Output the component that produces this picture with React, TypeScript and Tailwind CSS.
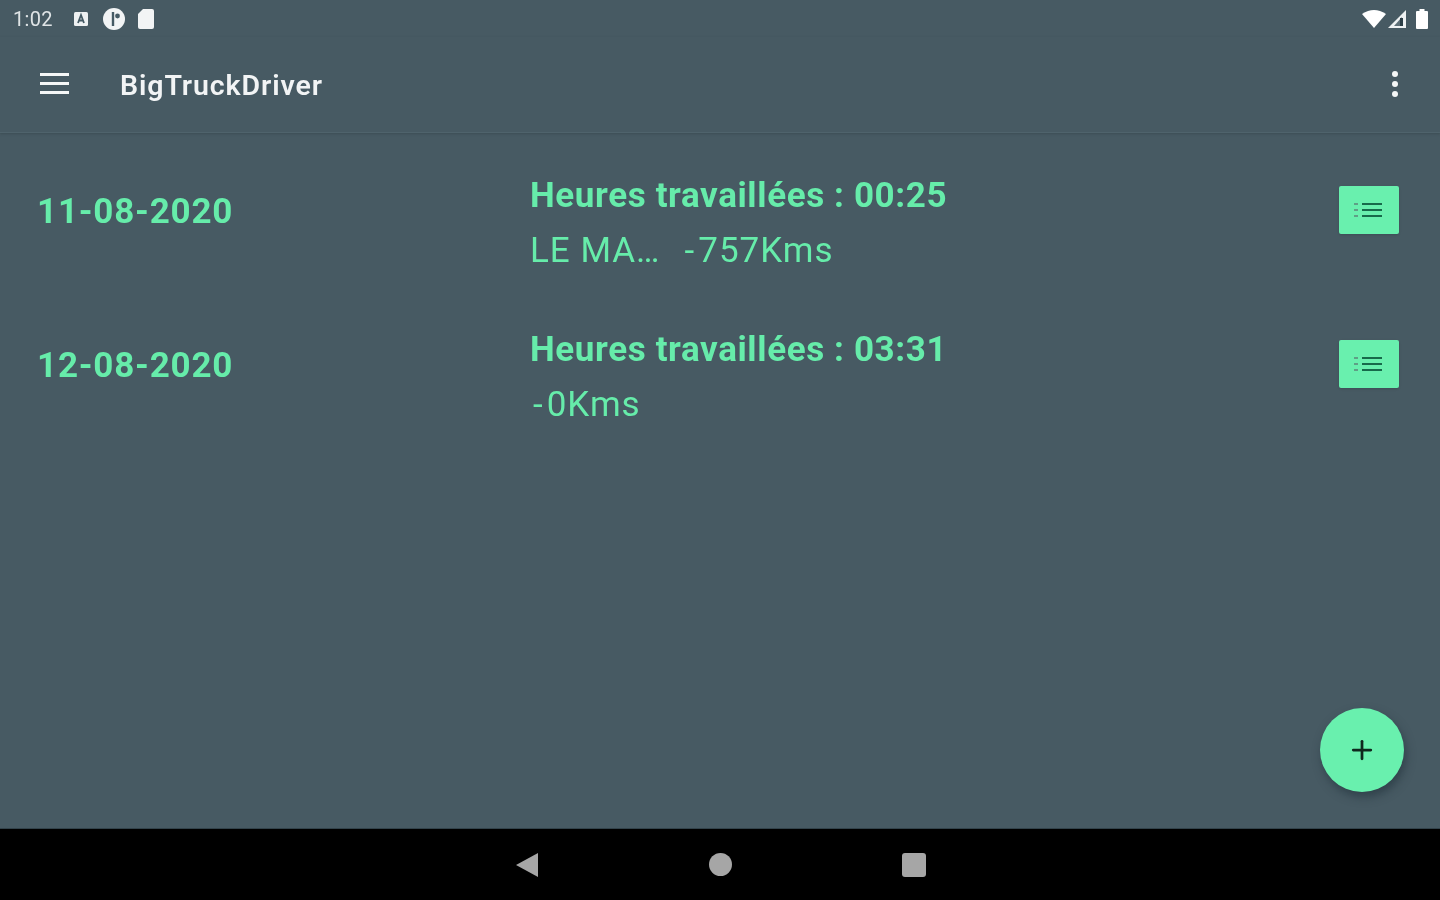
import React from 'react'
import { Plus } from 'lucide-react'

const days = [
  { date: '11-08-2020', hours: 'Heures travaillées : 00:25', place: 'LE MA…', kms: '757Kms' },
  { date: '12-08-2020', hours: 'Heures travaillées : 03:31', place: '', kms: '0Kms' },
]

const StatusBar = () => (
  <div className="h-[37px] flex items-center justify-between pl-[13px] pr-[9px] text-white">
    <div className="flex items-center">
      <span className="text-[20px] leading-none text-[#dfe4e6] w-[59px] tracking-[0.3px] pt-[1px]">1:02</span>
      {/* notification icons */}
      <svg width="18" height="18" viewBox="0 0 18 18" className="mr-[12px]">
        <rect x="2" y="2" width="14" height="14" rx="1.5" fill="#eef1f2" />
        <path d="M6 13 L9 5 L12 13 M7.2 10.5 H10.8" stroke="#455a64" strokeWidth="1.8" fill="none" />
      </svg>
      <svg width="24" height="24" viewBox="0 0 24 24" className="mr-[10px]">
        <circle cx="12" cy="12" r="11" fill="#f2f4f5" />
        <path d="M11 5 V19" stroke="#455a64" strokeWidth="2.4" />
        <circle cx="15.5" cy="9" r="2.4" fill="#455a64" />
      </svg>
      <svg width="20" height="22" viewBox="0 0 20 22">
        <path d="M7 1 H16 A2 2 0 0 1 18 3 V19 A2 2 0 0 1 16 21 H4 A2 2 0 0 1 2 19 V6 Z" fill="#f2f4f5" />
      </svg>
    </div>
    <div className="flex items-center">
      <svg width="26" height="20" viewBox="0 0 26 20">
        <path d="M1 5 Q13 -3 25 5 L13 19 Z" fill="#ffffff" />
      </svg>
      <svg width="20" height="20" viewBox="0 0 20 20">
        <path d="M1 19 L19 1 V19 Z" fill="#eef1f2" />
        <path d="M7 17 L15 8 V17 Z" fill="#5d6f77" />
        <rect x="13" y="9" width="3" height="8" fill="#2c3e46" />
      </svg>
      <svg width="18" height="22" viewBox="0 0 18 22" className="ml-[6px]">
        <path d="M6.5 1 H11.5 V3 H14 A1 1 0 0 1 15 4 V20 A1 1 0 0 1 14 21 H4 A1 1 0 0 1 3 20 V4 A1 1 0 0 1 4 3 H6.5 Z" fill="#ffffff" />
      </svg>
    </div>
  </div>
)

const Toolbar = () => (
  <div className="h-[96px] flex items-center border-b border-[#4f636c] shadow-[0_1px_2px_rgba(50,65,72,0.5)]">
    <div className="w-[120px] pl-[40px] flex flex-col gap-[6px] pb-[2px]">
      <div className="w-[29px] h-[3px] bg-[#f5f7f7]" />
      <div className="w-[29px] h-[3px] bg-[#f5f7f7]" />
      <div className="w-[29px] h-[3px] bg-[#f5f7f7]" />
    </div>
    <h1 className="text-[28.5px] font-semibold text-[#f2f4f5] leading-none flex-1 tracking-[0.9px] pt-[3px]">BigTruckDriver</h1>
    <div className="flex flex-col gap-[4px] pr-[42px] pb-[2px]">
      <div className="w-[6px] h-[6px] rounded-full bg-[#f5f7f7]" />
      <div className="w-[6px] h-[6px] rounded-full bg-[#f5f7f7]" />
      <div className="w-[6px] h-[6px] rounded-full bg-[#f5f7f7]" />
    </div>
  </div>
)

export default function App() {
  return (
    <div className="w-[1440px] h-[900px] overflow-hidden flex flex-col bg-[#475a63] font-['Roboto',sans-serif] blur-[0.6px]">
      <StatusBar />
      <Toolbar />
      <div className="flex-1 relative pt-[22px]">
        {days.map((d) => (
          <div key={d.date} className="h-[154px] flex items-start pt-[20px] text-[#66ecaa]">
            <div className="w-[530px] pl-[37px] pt-[16px] text-[35px] font-bold leading-[41px] tracking-[0.8px]">{d.date}</div>
            <div className="flex-1">
              <div className="text-[35px] font-bold leading-[41px] tracking-[0.62px]">{d.hours}</div>
              <div className="text-[35px] leading-[41px] mt-[14px] flex tracking-[1px]">
                {d.place && <span className="mr-[24px]">{d.place}</span>}
                <span className={d.place ? 'mr-[3px]' : 'ml-[3px] mr-[3px]'}>-</span>
                <span>{d.kms}</span>
              </div>
            </div>
            <div className="mr-[41px] mt-[11px] w-[60px] h-[48px] bg-[#69f0ae] rounded-[2px] flex items-center justify-center shadow-sm">
              <svg width="30" height="18" viewBox="0 0 30 18" className="-ml-[2px]">
                <path d="M1 3 H5 M1 9 H5 M1 15 H5" stroke="#5f9f86" strokeWidth="2.2" />
                <path d="M9 3 H29 M9 9 H29 M9 15 H29" stroke="#176a4a" strokeWidth="2.2" />
              </svg>
            </div>
          </div>
        ))}
        <button className="absolute right-[36px] bottom-[36px] w-[84px] h-[84px] rounded-full bg-[#69f0ae] flex items-center justify-center shadow-[2px_5px_10px_rgba(30,45,55,0.55)]">
          <Plus size={30} strokeWidth={2.2} className="text-[#10281e]" />
        </button>
      </div>
      <div className="h-[72px] bg-black flex items-center justify-center gap-[170px] border-t border-[#33434b]">
        <svg width="24" height="26" viewBox="0 0 24 26"><path d="M23 1 V25 L1 13 Z" fill="#a6a6a6" /></svg>
        <div className="w-[23px] h-[23px] rounded-full bg-[#a6a6a6]" />
        <div className="w-[24px] h-[24px] rounded-[3px] bg-[#a6a6a6]" />
      </div>
    </div>
  )
}
